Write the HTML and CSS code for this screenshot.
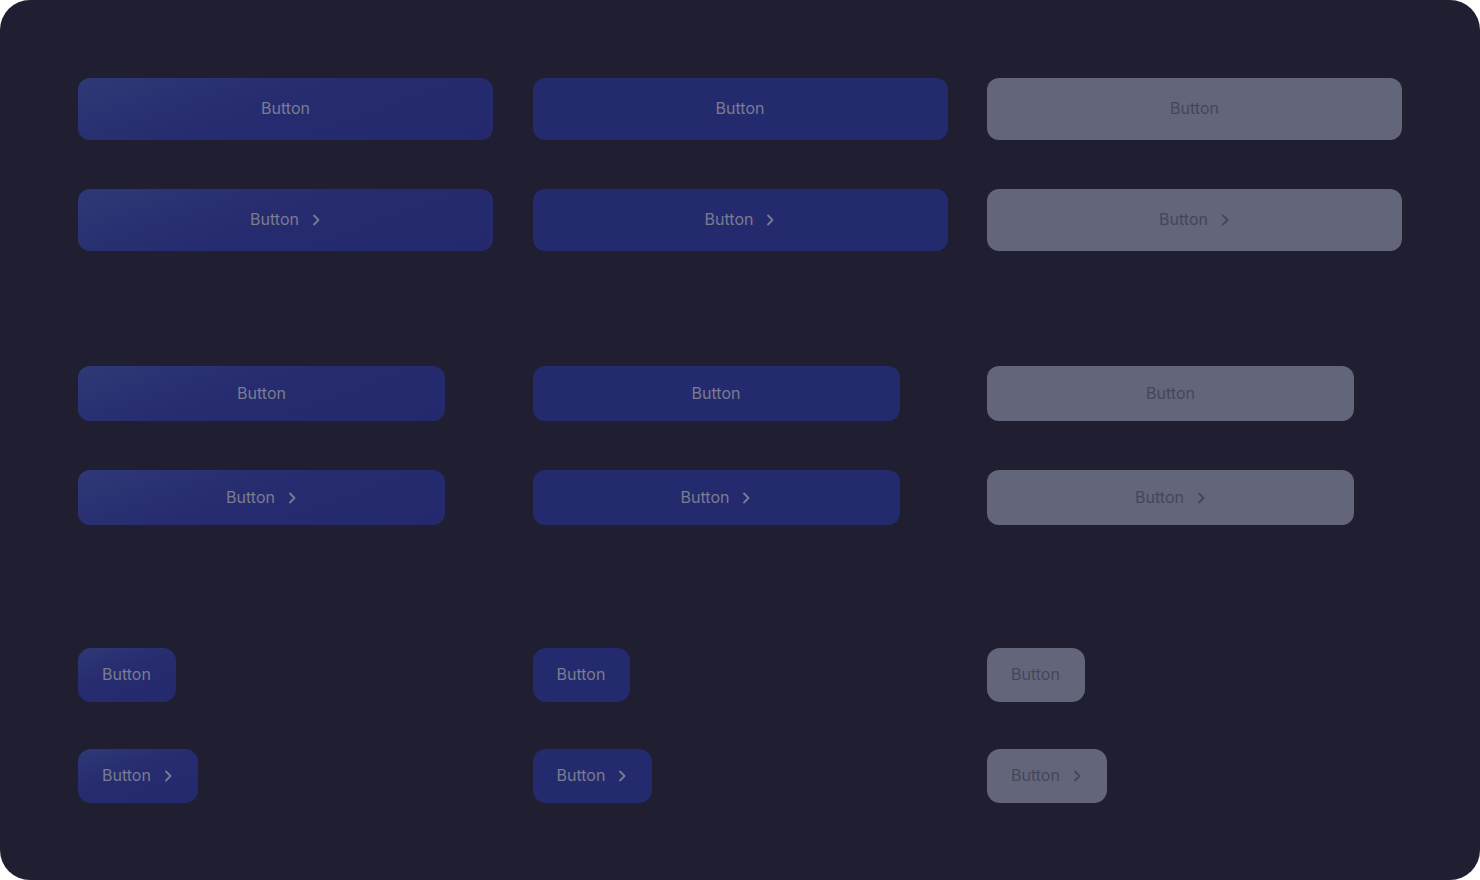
FILE: index.html
```html
<!DOCTYPE html>
<html lang="en">
<head>
  <meta charset="UTF-8" />
  <meta name="viewport" content="width=device-width, initial-scale=1" />
  <title>Buttons</title>
  <link rel="stylesheet" href="styles.css">
</head>
<body>
  <div class="board">
    <section class="group group-lg">
      <button class="btn btn-lg btn-grad">Button</button>
      <button class="btn btn-lg btn-solid">Button</button>
      <button class="btn btn-lg btn-off">Button</button>
      <button class="btn btn-lg btn-grad">Button <svg class="chev" viewBox="0 0 10 12"><path d="M3 1.5l4.5 4.5-4.5 4.5"/></svg></button>
      <button class="btn btn-lg btn-solid">Button <svg class="chev" viewBox="0 0 10 12"><path d="M3 1.5l4.5 4.5-4.5 4.5"/></svg></button>
      <button class="btn btn-lg btn-off">Button <svg class="chev" viewBox="0 0 10 12"><path d="M3 1.5l4.5 4.5-4.5 4.5"/></svg></button>
    </section>

    <section class="group group-md">
      <button class="btn btn-md btn-grad">Button</button>
      <button class="btn btn-md btn-solid">Button</button>
      <button class="btn btn-md btn-off">Button</button>
      <button class="btn btn-md btn-grad">Button <svg class="chev" viewBox="0 0 10 12"><path d="M3 1.5l4.5 4.5-4.5 4.5"/></svg></button>
      <button class="btn btn-md btn-solid">Button <svg class="chev" viewBox="0 0 10 12"><path d="M3 1.5l4.5 4.5-4.5 4.5"/></svg></button>
      <button class="btn btn-md btn-off">Button <svg class="chev" viewBox="0 0 10 12"><path d="M3 1.5l4.5 4.5-4.5 4.5"/></svg></button>
    </section>

    <section class="group group-sm">
      <button class="btn btn-sm btn-grad">Button</button>
      <button class="btn btn-sm btn-solid">Button</button>
      <button class="btn btn-sm btn-off">Button</button>
      <button class="btn btn-sm btn-grad">Button <svg class="chev" viewBox="0 0 10 12"><path d="M3 1.5l4.5 4.5-4.5 4.5"/></svg></button>
      <button class="btn btn-sm btn-solid">Button <svg class="chev" viewBox="0 0 10 12"><path d="M3 1.5l4.5 4.5-4.5 4.5"/></svg></button>
      <button class="btn btn-sm btn-off">Button <svg class="chev" viewBox="0 0 10 12"><path d="M3 1.5l4.5 4.5-4.5 4.5"/></svg></button>
    </section>
  </div>
</body>
</html>
```

FILE: styles.css
```css
html, body {
  height: 100%;
  margin: 0;
  background: #ffffff;
  font-family: Inter, "Liberation Sans", sans-serif;
}

.board {
  box-sizing: border-box;
  width: 1480px;
  height: 880px;
  padding: 78px 78px 0 78px;
  background: #1f1f31;
  border-radius: 30px;
  overflow: hidden;
}

.group {
  display: grid;
  grid-template-columns: repeat(3, 414.5px);
  column-gap: 40px;
  justify-items: start;
}

.group-lg { row-gap: 49px; }
.group-md { row-gap: 49px; margin-top: 115px; }
.group-sm { row-gap: 47px; margin-top: 123px; }

.btn {
  display: flex;
  align-items: center;
  justify-content: center;
  gap: 12px;
  border: none;
  margin: 0;
  padding: 0 0 2px 0;
  font-family: inherit;
  font-size: 16px;
  color: #7a7c90;
  cursor: pointer;
}

.btn-lg {
  width: 415px;
  height: 62px;
  border-radius: 12px;
}

.btn-md {
  width: 367px;
  height: 55px;
  border-radius: 12px;
}

.btn-sm {
  height: 54px;
  padding: 0 25px 2px 24px;
  border-radius: 13px;
}

.btn-grad {
  background: linear-gradient(160deg, #2f3877 0%, #262c6f 45%, #24296e 100%);
}

.btn-solid {
  background: #242a6e;
}

.btn-off {
  background: #63657a;
  color: #45465a;
}

.chev {
  width: 10px;
  height: 12px;
  margin-top: 2px;
  fill: none;
  stroke: currentColor;
  stroke-width: 1.8;
  stroke-linecap: round;
  stroke-linejoin: round;
}
```
